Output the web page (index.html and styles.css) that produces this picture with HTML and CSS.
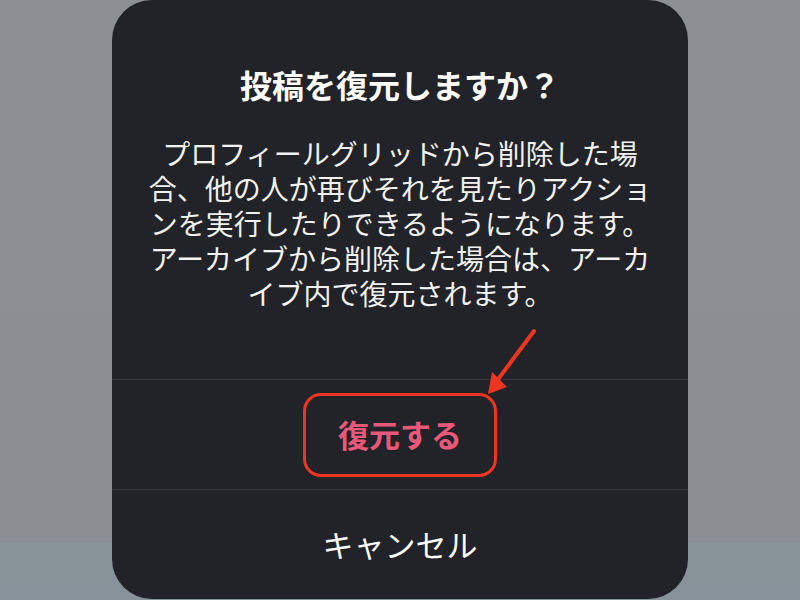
FILE: index.html
```html
<!DOCTYPE html>
<html lang="ja">
<head>
<meta charset="UTF-8">
<meta name="viewport" content="width=device-width, initial-scale=1.0">
<title>投稿を復元しますか？</title>
<link rel="stylesheet" href="styles.css">
</head>
<body>
<div class="screen">
<div class="alert">
<div class="alert-body">
<h2 class="alert-title">投稿を復元しますか？</h2>
<p class="alert-message">
<span class="line">プロフィールグリッドから削除した場</span>
<span class="line">合、他の人が再びそれを見たりアクショ</span>
<span class="line">ンを実行したりできるようになります。</span>
<span class="line">アーカイブから削除した場合は、アーカ</span>
<span class="line">イブ内で復元されます。</span>
</p>
</div>
<div class="alert-action restore">
<span class="callout">復元する</span>
</div>
<div class="alert-action cancel">キャンセル</div>
</div>
<svg class="arrow" width="60" height="80" viewBox="0 0 60 80">
<line x1="54" y1="6" x2="19" y2="53" stroke="#ee3522" stroke-width="4" stroke-linecap="round"/>
<polygon points="8,69 12,47 27,62" fill="#ee3522"/>
</svg>
</div>
</body>
</html>
```

FILE: styles.css
```css
body {
margin: 0;
padding: 0;
font-family: "Noto Sans CJK JP", "Noto Sans", sans-serif;
}
.screen {
position: relative;
width: 800px;
height: 600px;
overflow: hidden;
background: linear-gradient(#8c9094 0, #8b8f93 542px, #88939a 542px, #87929a 600px);
}
.alert {
width: 576px;
height: 599px;
margin: 0 auto;
background: #222328;
border-radius: 40px;
color: #fff;
display: flex;
flex-direction: column;
}
.alert-body {
padding: 65px 20px 68px;
text-align: center;
}
.alert-title {
margin: 0;
font-size: 32px;
line-height: 38px;
font-weight: bold;
}
.alert-message {
margin: 33px 0 0;
font-size: 28px;
color: #f2f2f2;
white-space: nowrap;
}
.alert-message .line {
display: block;
height: 35px;
line-height: 35px;
overflow: visible;
}
.alert-action {
display: flex;
align-items: center;
justify-content: center;
border-top: 1px solid #36373c;
font-size: 31px;
}
.restore {
height: 109px;
}
.cancel {
flex: 1;
padding-bottom: 2px;
}
.callout {
box-sizing: border-box;
display: flex;
align-items: center;
height: 84px;
padding: 0 32px 2px;
border: 3px solid #ee3522;
border-radius: 18px;
color: #e8587a;
font-weight: bold;
}
.arrow {
position: absolute;
left: 480px;
top: 325px;
}
```
